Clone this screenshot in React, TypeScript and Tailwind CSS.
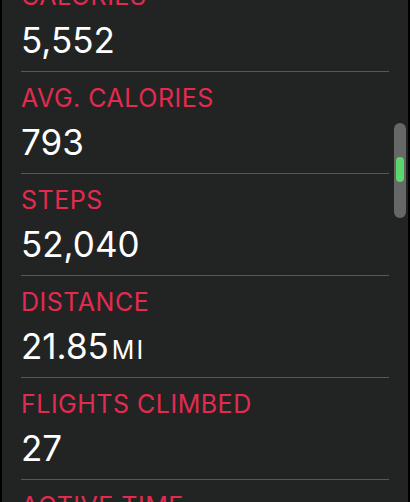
const rows = [
  { label: 'CALORIES', value: '5,552' },
  { label: 'AVG. CALORIES', value: '793' },
  { label: 'STEPS', value: '52,040' },
  { label: 'DISTANCE', value: '21.85', unit: 'MI' },
  { label: 'FLIGHTS CLIMBED', value: '27' },
  { label: 'ACTIVE TIME', value: '3:12' },
];

function Scrollbar() {
  return (
    <div className="absolute left-[394px] top-[123px] flex h-[95px] w-[12px] justify-center rounded-full bg-[#666767] pt-[34px]">
      <div className="h-[25px] w-[8px] rounded-full bg-[#5dd66f]" />
    </div>
  );
}

export default function App() {
  return (
    <div
      className="relative flex h-[502px] w-[410px] overflow-hidden bg-black"
      style={{ fontFamily: 'Inter, "Noto Sans", sans-serif' }}
    >
      <div className="ml-[2px] mr-[2px] flex-1 bg-[#222424]">
        <div className="-mt-[31px] pl-[19px] pr-[19px]">
          {rows.map((r) => (
            <div key={r.label} className="border-t border-[#565757] pb-[9px] pt-[11px]">
              <div className="text-[25px] leading-[30px] tracking-[0.5px] text-[#e32b4f]">{r.label}</div>
              <div className="mt-[7px] flex h-[44px] items-baseline text-[35px] leading-[44px] text-white">
                <span>{r.value}</span>
                {r.unit && <span className="ml-[3px] text-[25px] leading-none tracking-[2px]">{r.unit}</span>}
              </div>
            </div>
          ))}
        </div>
      </div>
      <Scrollbar />
    </div>
  );
}
